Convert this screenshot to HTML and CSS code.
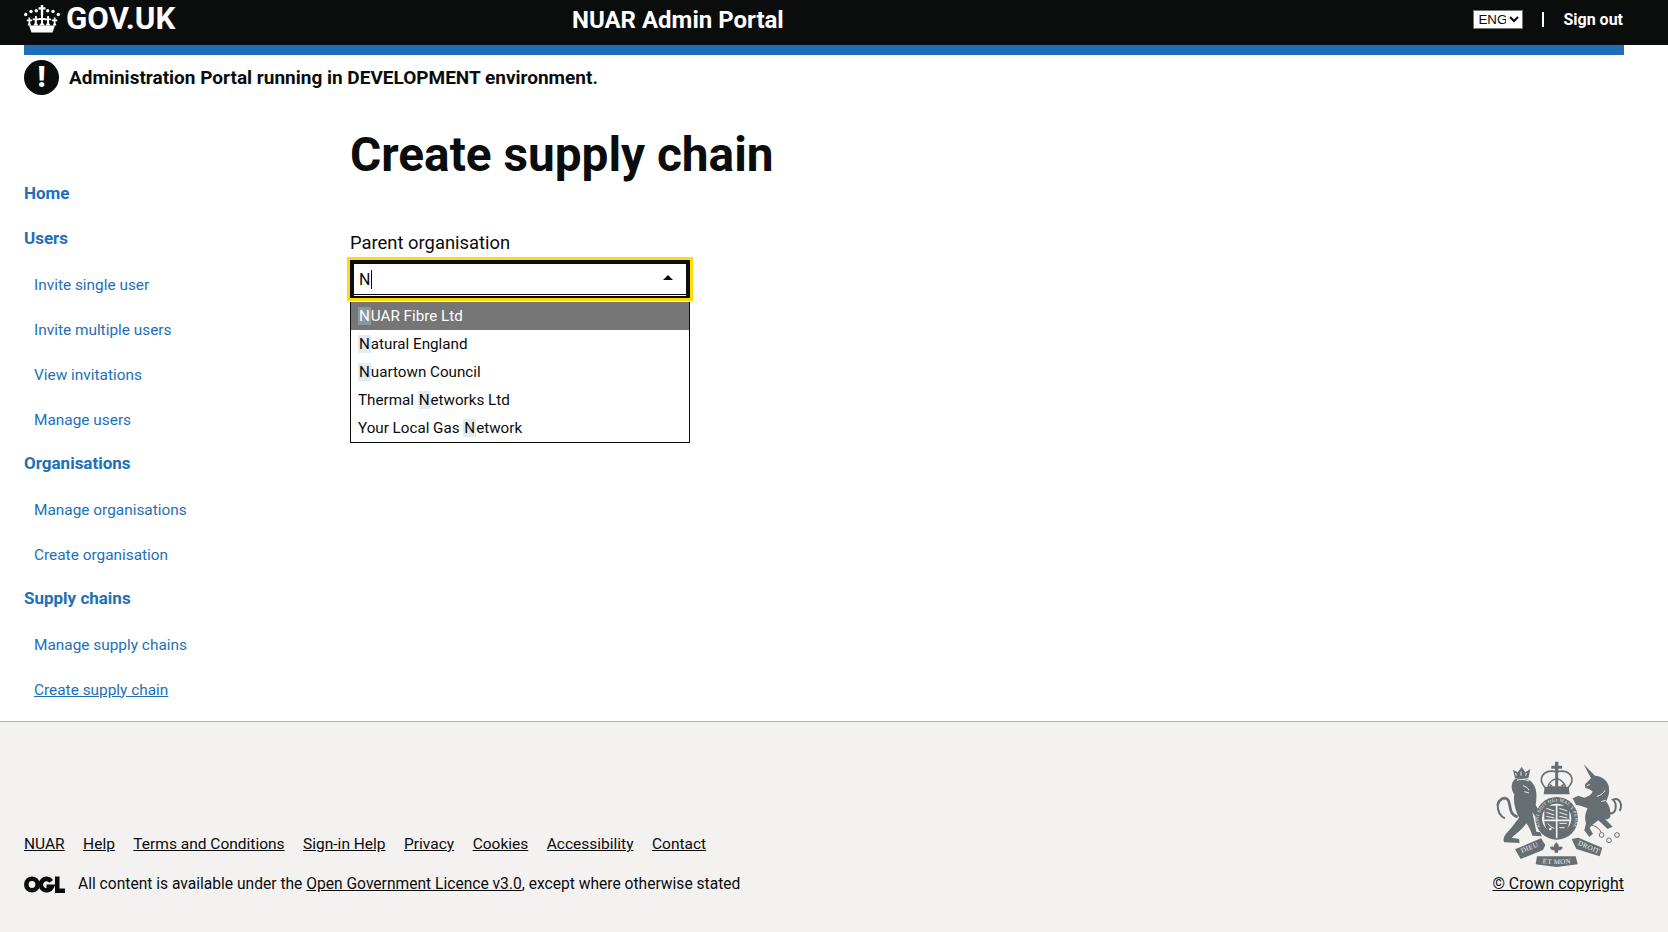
FILE: index.html
```html
<!DOCTYPE html>
<html lang="en">
<head>
<meta charset="utf-8">
<title>Create supply chain</title>
<link rel="stylesheet" href="styles.css">
</head>
<body>
<header class="topbar">
  <a class="brand">
    <svg class="crown" viewBox="0 0 36 28" aria-hidden="true">
      <g fill="#fff">
        <path d="M5 20.500h26l-2.500 7h-21z"/>
        <path d="M16.800 0h2.400v2.200h2.300v2.300h-2.300v6h-2.400v-6h-2.300V2.200h2.300z"/>
        <path d="M17 10h2v3h2.500v2H19v3l2 2.500H15l2-2.500v-3h-2.500v-2H17z"/>
        <path d="M11 11h1.800v2.400H15v1.800h-2.200V18l1.500 2.500h-5L10.800 18v-2.800H8.600v-1.800H11z"/>
        <path d="M23.200 11H25v2.400h2.200v1.800H25V18l1.500 2.500h-5l1.500-2.500v-2.800h-2.200v-1.800h2.200z"/>
        <path d="M4.500 12.500h1.700v2h1.800v1.700H6.200v1.800l1 2.500H3.600l.9-2.500v-1.800H2.800v-1.700h1.700z"/>
        <path d="M29.800 12.500h1.700v2h1.700v1.700h-1.700v1.800l.9 2.500h-3.600l1-2.500v-1.800H28v-1.700h1.800z"/>
        <circle cx="1.700" cy="9.500" r="1.700"/><circle cx="7" cy="6.500" r="1.700"/><circle cx="12.300" cy="5.800" r="1.700"/>
        <circle cx="23.700" cy="5.800" r="1.700"/><circle cx="29" cy="6.500" r="1.700"/><circle cx="34.300" cy="9.500" r="1.700"/>
      </g>
    </svg>
    <span class="brand-text">GOV.UK</span>
  </a>
  <div class="portal-name">NUAR Admin Portal</div>
  <div class="top-actions">
    <select class="lang"><option>ENG</option></select>
    <span class="divider"></span>
    <a class="signout">Sign out</a>
  </div>
</header>
<div class="bluebar"></div>
<div class="alert">
  <span class="alert-icon">!</span>
  <strong class="alert-text">Administration Portal running in DEVELOPMENT environment.</strong>
</div>
<div class="page">
  <nav class="sidenav">
    <a class="nav-main">Home</a>
    <a class="nav-main">Users</a>
    <a class="nav-sub">Invite single user</a>
    <a class="nav-sub">Invite multiple users</a>
    <a class="nav-sub">View invitations</a>
    <a class="nav-sub">Manage users</a>
    <a class="nav-main">Organisations</a>
    <a class="nav-sub">Manage organisations</a>
    <a class="nav-sub">Create organisation</a>
    <a class="nav-main">Supply chains</a>
    <a class="nav-sub">Manage supply chains</a>
    <a class="nav-sub current">Create supply chain</a>
  </nav>
  <main class="content">
    <h1 class="title">Create supply chain</h1>
    <label class="field-label">Parent organisation</label>
    <div class="combo">
      <div class="combo-input"><span class="typed">N</span><span class="caret"></span><span class="arrow"></span></div>
      <ul class="options">
        <li class="option active"><span class="hl">N</span>UAR Fibre Ltd</li>
        <li class="option"><span class="hl">N</span>atural England</li>
        <li class="option"><span class="hl">N</span>uartown Council</li>
        <li class="option">Thermal <span class="hl">N</span>etworks Ltd</li>
        <li class="option">Your Local Gas <span class="hl">N</span>etwork</li>
      </ul>
    </div>
  </main>
</div>
<footer class="footer">
  <div class="footer-left">
    <div class="footer-links">
      <a>NUAR</a><a>Help</a><a>Terms and Conditions</a><a>Sign-in Help</a><a>Privacy</a><a>Cookies</a><a>Accessibility</a><a>Contact</a>
    </div>
    <div class="licence">
      <svg class="ogl" viewBox="0 0 41 17" aria-hidden="true">
        <circle cx="8" cy="8.500" r="5.700" fill="none" stroke="#0b0c0c" stroke-width="4.600"/>
        <path d="M27.200 5.300A5.700 5.700 0 1 0 27.800 10.800H22.500" fill="none" stroke="#0b0c0c" stroke-width="4.600"/>
        <path fill="#0b0c0c" d="M31 .6h4.500v11.900H41V17H31z"/>
      </svg>
      <span class="licence-text">All content is available under the <a>Open Government Licence v3.0</a>, except where otherwise stated</span>
    </div>
  </div>
  <div class="footer-right">
    <svg class="crest" viewBox="0 0 405 345" aria-hidden="true">
      <defs>
        <path id="garter-ring" d="M160 233A54 54 0 1 1 234 233"/>
        <path id="rib-left" d="M84 298L152 270"/>
        <path id="rib-mid" d="M150 324Q197 330 245 324"/>
        <path id="rib-right" d="M256 268L326 298"/>
      </defs>
      <g fill="#666e72">
        <path d="M192 20h10v12h11v9h-11v12h-10V41h-11v-9h11z"/>
        <path d="M161 96h72l3 22h-78z"/>
        <path d="M165 100C136 72 156 42 197 50 238 42 258 72 229 100" fill="none" stroke="#666e72" stroke-width="5"/>
        <path d="M197 52v44" stroke="#666e72" stroke-width="9"/>
        <path d="M170 96c4-12 12-22 27-26 15 4 23 14 27 26z" fill="none" stroke="#666e72" stroke-width="4"/>
        <path d="M178 96l-4-10 11 5zM216 96l4-10-11 5z"/>
        <circle cx="197" cy="190" r="64"/>
        <path d="M72 72C58 85 60 105 70 118 66 140 72 165 84 188 72 205 56 225 46 235 38 245 35 255 40 262L86 264 84 252 62 248C76 236 95 222 106 205 114 215 120 228 124 242L152 244 148 232 136 230 130 200 124 172 156 216 166 206 134 150C138 125 138 100 126 86 116 70 90 65 72 72Z"/>
        <path d="M80 186C52 178 60 150 52 136 42 122 24 132 20 150" fill="none" stroke="#666e72" stroke-width="8"/>
        <path d="M42 190C28 184 20 170 20 150" fill="none" stroke="#666e72" stroke-width="6"/>
        <path d="M72 70L66 44 80 52 92 36 103 52 118 42 112 70Z"/>
        <path d="M278 28L312 62C325 62 345 70 352 90 358 110 352 125 345 140 355 150 360 165 358 185 352 195 345 195 340 190L365 215 350 222 322 196C310 206 300 212 296 220L306 236 295 246 280 226 285 205C280 190 282 175 290 160 275 155 265 150 255 150L245 130 262 122 280 128C290 125 300 120 305 110 300 105 290 100 283 100L282 88 300 70Z"/>
        <path d="M352 176C382 178 376 142 366 134 386 126 396 150 386 168" fill="none" stroke="#666e72" stroke-width="6"/>
        <path d="M285 212C296 206 322 212 330 232" fill="none" stroke="#666e72" stroke-width="3"/>
        <circle cx="332" cy="240" r="7" fill="none" stroke="#666e72" stroke-width="3"/>
        <circle cx="354" cy="256" r="7" fill="none" stroke="#666e72" stroke-width="3"/>
        <circle cx="378" cy="240" r="7" fill="none" stroke="#666e72" stroke-width="3"/>
        <path d="M196 262c5 5 8 9 8 14 4-2 9-2 11 1-1 7-8 10-13 8l-1 8h-10l-1-8c-5 2-12-1-13-8 2-3 7-3 11-1 0-5 3-9 8-14z"/>
        <path d="M72 283L150 250 163 270 156 285 89 312Z"/>
        <path d="M138 304L254 304 260 328 197 336 134 328Z"/>
        <path d="M242 252L262 248 334 278 326 304 256 282Z"/>
      </g>
      <path d="M76 62l-2-8M90 62V50M104 62l2-8M78 76c8-4 24-4 36 2M96 92c8 2 16 8 18 14M100 110l14 4M288 92l8-4M318 124c10-2 20-10 24-18M330 140l14-4" stroke="#f3f2f1" stroke-width="3" fill="none"/>
      <circle cx="197" cy="190" r="44" fill="#f3f2f1"/>
      <path fill="#666e72" d="M160 152H235V195C235 225 215 240 197 249 180 240 160 225 160 195Z"/>
      <path d="M197 152V249M160 196H235" stroke="#f3f2f1" stroke-width="5"/>
      <path d="M166 160l24 8M166 172l24 8M166 184l24 5M205 160l24 8M205 172l24 8M205 184l24 5M205 205h22M205 218h16M170 205c6 8 14 14 20 15" stroke="#f3f2f1" stroke-width="3" fill="none"/>
      <circle cx="178" cy="222" r="4" fill="#f3f2f1"/>
      <g class="crest-text">
        <text class="crest-ring"><textPath href="#garter-ring" startOffset="50%">HONI SOIT QUI MAL Y PENSE</textPath></text>
        <text class="crest-rib"><textPath href="#rib-left" startOffset="50%">DIEU</textPath></text>
        <text class="crest-rib"><textPath href="#rib-mid" startOffset="50%">ET MON</textPath></text>
        <text class="crest-rib"><textPath href="#rib-right" startOffset="50%">DROIT</textPath></text>
      </g>
    </svg>
    <a class="copyright">© Crown copyright</a>
  </div>
</footer>
</body>
</html>
```

FILE: styles.css
```css
* { box-sizing: border-box; }
html, body { margin: 0; height: 100%; }
body {
  font-family: Roboto, "Liberation Sans", sans-serif;
  color: #0b0c0c;
  background: #fff;
  display: flex;
  flex-direction: column;
  min-height: 932px;
  overflow: hidden;
}
.topbar {
  height: 45px;
  background: #0b0c0c;
  color: #fff;
  display: flex;
  align-items: center;
  padding: 0 44px 0 24px;
  flex: none;
}
.brand { display: flex; align-items: center; gap: 6px; width: 548px; margin-top: -7px; }
.crown { width: 36px; height: 28px; display: block; }
.brand-text { font-size: 31.300px; font-weight: 700; line-height: 1; }
.portal-name { font-size: 24px; font-weight: 700; margin-top: -6px; }
.top-actions { margin-left: auto; display: flex; align-items: center; margin-top: -6px; }
.lang {
  width: 50px; height: 19px; padding: 0; border: 1px solid #767676; background: #fff;
  font-family: "Liberation Sans", sans-serif; font-size: 13.333px; color: #0b0c0c; border-radius: 0;
}
.divider { width: 2px; height: 15px; background: #fff; margin: 0 19px; }
.signout { font-size: 16px; font-weight: 700; margin-right: 1px; }
.bluebar { height: 10px; margin: 0 44px 0 24px; background: #1d70b8; flex: none; }
.alert { display: flex; align-items: center; gap: 10px; padding: 5px 24px 0; flex: none; height: 40px; }
.alert-icon {
  width: 35px; height: 35px; border-radius: 50%; background: #0b0c0c; color: #fff;
  display: flex; align-items: center; justify-content: center; font-weight: 900; font-size: 29px; line-height: 1;
}
.alert-text { font-size: 19px; font-weight: 700; }
.page { flex: 1; display: flex; padding-left: 24px; }
.sidenav { width: 326px; display: flex; flex-direction: column; padding-top: 76px; }
.nav-main, .nav-sub { height: 45px; display: flex; align-items: center; color: #1d70b8; flex: none; }
.nav-main { font-size: 17px; font-weight: 700; padding-bottom: 1px; }
.nav-sub { font-size: 15.400px; padding: 2px 0 0 10px; }
.nav-sub.current { text-decoration: underline; }
.content { display: flex; flex-direction: column; padding-top: 30px; align-items: flex-start; }
.title { margin: 0; font-size: 47.750px; line-height: 60px; font-weight: 700; }
.field-label { font-size: 18.400px; line-height: 25px; margin-top: 45px; }
.combo { position: relative; width: 340px; margin-top: 5px; }
.combo-input {
  height: 38px;
  border: 4px solid #0b0c0c; border-bottom-width: 2px;
  outline: 3px solid #ffdd00;
  box-shadow: inset 0 -1px 0 #fff, inset 0 -2px 0 #0b0c0c;
  display: flex; align-items: center; padding: 0 0 2px 5px; background: #fff; font-size: 16px;
}
.caret { width: 1px; height: 19px; background: #0b0c0c; margin-left: 1px; }
.arrow {
  position: absolute; right: 17px; top: 15px; width: 0; height: 0;
  border-left: 5px solid transparent; border-right: 5px solid transparent; border-bottom: 5px solid #0b0c0c;
}
.options {
  list-style: none; margin: 4px 0 0; padding: 0; border: 1px solid #0b0c0c; border-top: 0; background: #fff;
}
.option { height: 28px; padding: 0 0 1px 7px; display: flex; align-items: center; white-space: pre; font-size: 15.200px; color: #0b0c0c; }
.option.active { background: #767676; color: #fff; }
.hl { background: #e4eaf2; padding: 0 1px; }
.active .hl { background: #8c96a0; }
.footer {
  flex: none; height: 211px; background: #f3f2f1; border-top: 1px solid #b1b4b6;
  display: flex; justify-content: space-between; align-items: flex-end;
  padding: 0 44px 39px 24px; font-size: 15.600px;
}
.footer a { color: #0b0c0c; text-decoration: underline; }
.footer-links { display: flex; gap: 18.500px; margin-bottom: 22px; font-size: 15.500px; }
.licence { display: flex; align-items: center; gap: 13px; }
.ogl { width: 41px; height: 17px; display: block; }
.footer-right { display: flex; flex-direction: column; align-items: center; }
.copyright { font-size: 15.900px; }
.crest { width: 135px; height: 115px; display: block; margin: 0 -3px 4px; }
.crest-text { font-family: "Liberation Serif", serif; fill: #f3f2f1; text-anchor: middle; }
.crest-ring { font-size: 14px; letter-spacing: 1px; }
.crest-rib { font-size: 21px; letter-spacing: 1px; }
```
